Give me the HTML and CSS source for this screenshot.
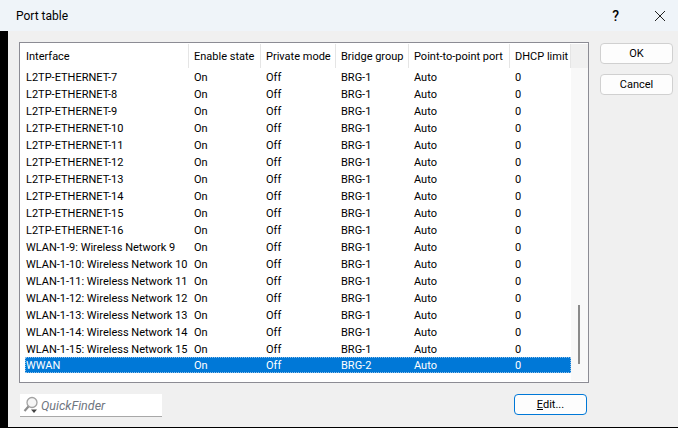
FILE: index.html
```html
<!DOCTYPE html>
<html lang="en">
<head>
    <meta charset="UTF-8">
    <title>Port table</title>
    <link rel="stylesheet" href="styles.css">
</head>
<body>
    <header class="titlebar">
        <span class="title">Port table</span>
        <span class="help">?</span>
        <svg class="close" width="12" height="12" viewBox="0 0 12 12"><path d="M1 1L11 11M11 1L1 11" stroke="#222" stroke-width="1" fill="none"/></svg>
    </header>
    <div class="window">
        <div class="edge"></div>
        <main class="dialog">
            <div class="top">
                <section class="frame">
                    <div class="list">
                        <table>
                            <thead>
                                <tr><th class="c1">Interface</th><th class="c2">Enable state</th><th class="c3">Private mode</th><th class="c4">Bridge group</th><th class="c5">Point-to-point port</th><th class="c6">DHCP limit</th></tr>
                            </thead>
                            <tbody>
                                <tr><td>L2TP-ETHERNET-7</td><td>On</td><td>Off</td><td>BRG-1</td><td>Auto</td><td>0</td></tr>
                                <tr><td>L2TP-ETHERNET-8</td><td>On</td><td>Off</td><td>BRG-1</td><td>Auto</td><td>0</td></tr>
                                <tr><td>L2TP-ETHERNET-9</td><td>On</td><td>Off</td><td>BRG-1</td><td>Auto</td><td>0</td></tr>
                                <tr><td>L2TP-ETHERNET-10</td><td>On</td><td>Off</td><td>BRG-1</td><td>Auto</td><td>0</td></tr>
                                <tr><td>L2TP-ETHERNET-11</td><td>On</td><td>Off</td><td>BRG-1</td><td>Auto</td><td>0</td></tr>
                                <tr><td>L2TP-ETHERNET-12</td><td>On</td><td>Off</td><td>BRG-1</td><td>Auto</td><td>0</td></tr>
                                <tr><td>L2TP-ETHERNET-13</td><td>On</td><td>Off</td><td>BRG-1</td><td>Auto</td><td>0</td></tr>
                                <tr><td>L2TP-ETHERNET-14</td><td>On</td><td>Off</td><td>BRG-1</td><td>Auto</td><td>0</td></tr>
                                <tr><td>L2TP-ETHERNET-15</td><td>On</td><td>Off</td><td>BRG-1</td><td>Auto</td><td>0</td></tr>
                                <tr><td>L2TP-ETHERNET-16</td><td>On</td><td>Off</td><td>BRG-1</td><td>Auto</td><td>0</td></tr>
                                <tr><td>WLAN-1-9: Wireless Network 9</td><td>On</td><td>Off</td><td>BRG-1</td><td>Auto</td><td>0</td></tr>
                                <tr><td>WLAN-1-10: Wireless Network 10</td><td>On</td><td>Off</td><td>BRG-1</td><td>Auto</td><td>0</td></tr>
                                <tr><td>WLAN-1-11: Wireless Network 11</td><td>On</td><td>Off</td><td>BRG-1</td><td>Auto</td><td>0</td></tr>
                                <tr><td>WLAN-1-12: Wireless Network 12</td><td>On</td><td>Off</td><td>BRG-1</td><td>Auto</td><td>0</td></tr>
                                <tr><td>WLAN-1-13: Wireless Network 13</td><td>On</td><td>Off</td><td>BRG-1</td><td>Auto</td><td>0</td></tr>
                                <tr><td>WLAN-1-14: Wireless Network 14</td><td>On</td><td>Off</td><td>BRG-1</td><td>Auto</td><td>0</td></tr>
                                <tr><td>WLAN-1-15: Wireless Network 15</td><td>On</td><td>Off</td><td>BRG-1</td><td>Auto</td><td>0</td></tr>
                                <tr class="selected"><td>WWAN</td><td>On</td><td>Off</td><td>BRG-2</td><td>Auto</td><td>0</td></tr>
                            </tbody>
                        </table>
                        <div class="scrollbar"><div class="thumb"></div></div>
                    </div>
                </section>
                <aside class="side">
                    <button class="btn">OK</button>
                    <button class="btn">Cancel</button>
                </aside>
            </div>
            <div class="bottom">
                <div class="finder">
                    <svg width="16" height="18" viewBox="0 0 16 18">
                        <circle cx="9" cy="6.5" r="5" fill="#f6f6f6" stroke="#a2a2a2" stroke-width="1.3"/>
                        <path d="M5.5 10.5L1.5 15" stroke="#8e8e8e" stroke-width="2.2"/>
                        <path d="M8 13.5H14L11 17Z" fill="#444"/>
                    </svg>
                    <span>QuickFinder</span>
                </div>
                <button class="btn edit"><u>E</u>dit...</button>
            </div>
        </main>
    </div>
    <div class="bottom-edge"></div>
</body>
</html>
```

FILE: styles.css
```css
* {
    box-sizing: border-box;
}
html, body {
    height: 100%;
}
body {
    margin: 0;
    display: flex;
    flex-direction: column;
    overflow: hidden;
    font-family: Roboto, "Open Sans", sans-serif;
    font-size: 11px;
    color: #000;
    background-color: #000;
}
.titlebar {
    height: 31px;
    flex: none;
    display: flex;
    align-items: center;
    background-color: #eff4f9;
    padding: 0 12px 0 16px;
}
.title {
    font-size: 12px;
    margin-right: auto;
}
.help {
    font-size: 14px;
    font-weight: 500;
    margin-right: 35px;
}
.window {
    flex: 1;
    display: flex;
    min-height: 0;
}
.edge {
    width: 8px;
    background-color: #000;
}
.dialog {
    flex: 1;
    display: flex;
    flex-direction: column;
    background-color: #f0f0f0;
    padding: 11px 5px 0 11px;
}
.top {
    display: flex;
    align-items: flex-start;
}
.frame {
    width: 570px;
    height: 341px;
    border: 1px solid #8c8c94;
    background-color: #fff;
    padding-top: 1px;
}
.list {
    display: flex;
    height: 100%;
}
table {
    border-collapse: separate;
    border-spacing: 0;
    table-layout: fixed;
    width: 546px;
    height: 0;
    margin-left: 5px;
}
th {
    height: 24px;
    font-weight: normal;
    text-align: left;
    padding: 0 0 0 5px;
    border-right: 1px solid #e5e5e5;
    white-space: nowrap;
    overflow: hidden;
}
td {
    height: 17px;
    padding: 1px 0 0 5px;
    white-space: nowrap;
    overflow: hidden;
}
th.c1, td:first-child {
    padding-left: 1px;
}
.c1 { width: 164px; }
.c2 { width: 72px; }
.c3 { width: 75px; }
.c4 { width: 73px; }
.c5 { width: 101px; }
.c6 { width: 61px; }
.selected {
    outline: 1px dotted #8fbfe8;
    outline-offset: -1px;
}
.selected td {
    height: 16px;
    background-color: #0078d7;
    color: #fff;
}
.scrollbar {
    flex: 1;
    position: relative;
    background-color: #f8f8f8;
    margin-bottom: 1px;
    border-top: 24px solid #f0f0f0;
}
.thumb {
    position: absolute;
    left: 7px;
    top: 237px;
    width: 2px;
    height: 59px;
    background-color: #8a8a8a;
}
.side {
    margin-left: 11px;
    display: flex;
    flex-direction: column;
    gap: 10px;
    padding-top: 1px;
}
.btn {
    width: 73px;
    height: 21px;
    font: inherit;
    color: #000;
    background-color: #fdfdfd;
    border: 1px solid #d0d0d0;
    border-radius: 4px;
    padding: 0;
}
.bottom {
    display: flex;
    justify-content: space-between;
    padding: 11px 86px 0 1px;
}
.finder {
    width: 142px;
    height: 23px;
    display: flex;
    align-items: center;
    gap: 2px;
    padding-left: 3px;
    background-color: #fff;
    border-bottom: 1px solid #a8a8a8;
    color: #6f7680;
    font-style: italic;
    font-size: 12.5px;
}
.edit {
    border: 1px solid #0078d7;
    height: 21px;
}
.bottom-edge {
    height: 1px;
    flex: none;
    background-color: #000;
}
```
